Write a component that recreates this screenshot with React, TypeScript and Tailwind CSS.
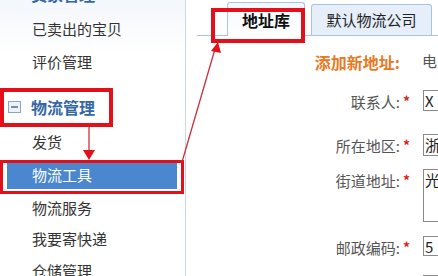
import React from "react";

const font = { fontFamily: '"Noto Sans CJK SC", "Noto Sans", sans-serif' };

const SideItem = ({ label, h }: { label: string; h: string }) => (
  <div className={`flex shrink-0 items-center pl-[32px] text-[15px] text-[#333] ${h}`}>{label}</div>
);

const SideHead = ({ label, className }: { label: string; className: string }) => (
  <div className={`flex shrink-0 items-center gap-[10px] pl-[8px] ${className}`}>
    <span className="flex h-[12px] w-[13px] items-center justify-center border border-[#8aa6c6] bg-[#eef3f9]">
      <span className="h-[2px] w-[7px] bg-[#6f8fb5]" />
    </span>
    <span className="text-[16px] font-bold text-[#3467a3]">{label}</span>
  </div>
);

const Field = ({ label, mt, h, text }: { label: string; mt: string; h: string; text: string }) => (
  <div className={`flex shrink-0 ${mt}`}>
    <div className="flex w-[214px] items-start justify-end pt-[1px] text-[15px] text-[#555]">{label}:</div>
    <div className="w-[23px] pl-[3px] pt-[1px] text-[14px] font-bold text-[#e02020]">*</div>
    <div className={`flex-1 border border-r-0 border-[#8a8a8a] pl-[1px] text-[15px] leading-[19px] text-[#222] ${h}`}>{text}</div>
  </div>
);

export default function App() {
  return (
    <div className="relative flex h-[276px] w-[438px] overflow-hidden bg-white" style={font}>
      <aside className="flex w-[186px] shrink-0 flex-col border-r border-[#c9d7e6] bg-gradient-to-b from-[#f4f7fb] to-white to-[20%]">
        <SideHead label="卖家管理" className="mt-[-23px] h-[34px]" />
        <SideItem label="已卖出的宝贝" h="h-[36px]" />
        <SideItem label="评价管理" h="h-[30px]" />
        <SideHead label="物流管理" className="mt-[11px] h-[37px]" />
        <SideItem label="发货" h="h-[34px]" />
        <div className="shrink-0 py-[3px] pl-[7px] pr-[8px]">
          <div className="flex h-[27px] items-center bg-[#4a87cf] pl-[25px] text-[15px] text-white">物流工具</div>
        </div>
        <SideItem label="物流服务" h="h-[32px]" />
        <SideItem label="我要寄快递" h="h-[31px]" />
        <SideItem label="仓储管理" h="h-[32px]" />
      </aside>

      <main className="flex flex-1 flex-col">
        <div className="ml-[11px] flex h-[36px] shrink-0 items-end gap-[6px] border-b border-[#a9c4e3] pl-[30px]">
          <div className="-mb-px flex h-[34px] w-[78px] items-center justify-center rounded-t-[3px] border border-b-0 border-[#a9c4e3] bg-gradient-to-b from-[#f3f7fc] to-white text-[16px] font-bold text-[#111]">
            地址库
          </div>
          <div className="flex h-[31px] w-[121px] items-center justify-center rounded-t-[3px] border border-b-0 border-[#a9c4e3] bg-[#e6eefa] text-[15px] text-[#222]">
            默认物流公司
          </div>
        </div>

        <div className="mt-[14px] flex shrink-0">
          <div className="w-[214px] text-right text-[16px] font-bold text-[#e8791f]">添加新地址:</div>
          <div className="pl-[22px] text-[15px] text-[#555]">电</div>
        </div>
        <Field label="联系人" mt="mt-[16px]" h="h-[21px]" text="X" />
        <Field label="所在地区" mt="mt-[20px]" h="h-[22px]" text="浙" />
        <Field label="街道地址" mt="mt-[12px]" h="h-[53px]" text="光" />
        <Field label="邮政编码" mt="mt-[14px]" h="h-[20px]" text="5" />
        <Field label="电话号码" mt="mt-[15px]" h="h-[20px]" text="" />
      </main>

      {/* red annotation boxes */}
      <div className="pointer-events-none absolute left-0 top-[88px] h-[39px] w-[113px] border-[4px] border-[#e3101a]" />
      <div className="pointer-events-none absolute left-0 top-[160px] h-[34px] w-[184px] border-[3px] border-[#e3101a]" />
      <div className="pointer-events-none absolute left-[211px] top-[8px] h-[35px] w-[94px] border-[4px] border-[#e3101a]" />

      <svg className="pointer-events-none absolute left-0 top-0" width="438" height="276">
        <line x1="89" y1="127" x2="89" y2="151" stroke="#c8323a" strokeWidth="1.3" />
        <polygon points="83,150 95,150 89,160" fill="#e3101a" />
        <line x1="182" y1="162" x2="215" y2="49" stroke="#c8323a" strokeWidth="1.3" />
        <polygon points="211,51 221,53 218,42" fill="#e3101a" />
      </svg>
    </div>
  );
}
